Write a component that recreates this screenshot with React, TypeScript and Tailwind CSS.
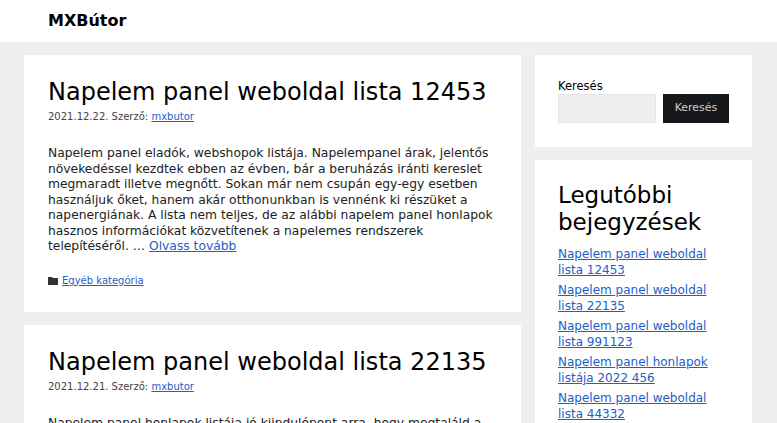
export default function App() {
  const recent = [
    "Napelem panel weboldal lista 12453",
    "Napelem panel weboldal lista 22135",
    "Napelem panel weboldal lista 991123",
    "Napelem panel honlapok listája 2022 456",
    "Napelem panel weboldal lista 44332",
  ]
  const link = "text-[#1e60c7] underline"
  return (
    <div className="h-[423px] overflow-hidden bg-[#efeff1] text-[#222] font-[DejaVu_Sans,sans-serif]">
      <header className="h-[42px] bg-white px-[48px] flex items-center">
        <span className="text-[16px] font-bold text-black">MXBútor</span>
      </header>
      <div className="flex gap-[14px] px-[24px] pt-[13px]">
        <main className="w-[497px] flex flex-col gap-[13px]">
          <article className="bg-white px-[24px] pt-[22px] pb-[24px]">
            <h2 className="text-[24px] leading-[30px] text-black">Napelem panel weboldal lista 12453</h2>
            <div className="text-[10px] mt-[2px] text-[#444]">
              2021.12.22. Szerző: <span className={link}>mxbutor</span>
            </div>
            <p className="mt-[22px] text-[12.3px] leading-[15.5px]">
              Napelem panel eladók, webshopok listája. Napelempanel árak, jelentős növekedéssel kezdtek ebben az évben, bár a beruházás iránti kereslet megmaradt illetve megnőtt. Sokan már nem csupán egy-egy esetben használjuk őket, hanem akár otthonunkban is vennénk ki részüket a napenergiának. A lista nem teljes, de az alábbi napelem panel honlapok hasznos információkat közvetítenek a napelemes rendszerek telepítéséről. … <span className={link}>Olvass tovább</span>
            </p>
            <div className="mt-[18px] flex items-center gap-[4px] text-[10px]">
              <svg width="10" height="9" viewBox="0 0 10 9"><path d="M0 1h4l1 1h5v7H0z" fill="#333" /></svg>
              <span className={link}>Egyéb kategória</span>
            </div>
          </article>
          <article className="bg-white px-[24px] pt-[22px] pb-[24px]">
            <h2 className="text-[24px] leading-[30px] text-black">Napelem panel weboldal lista 22135</h2>
            <div className="text-[10px] mt-[2px] text-[#444]">
              2021.12.21. Szerző: <span className={link}>mxbutor</span>
            </div>
            <p className="mt-[22px] text-[12.3px] leading-[15.5px]">
              Napelem panel honlapok listája jó kiindulópont arra, hogy megtaláld a legjobb és leghatékonyabb napelempaneleket. A lista tartalmazza a legnagyobb weboldalakat, ahol napelem paneleket vásárolhatsz.
            </p>
          </article>
        </main>
        <aside className="w-[217px] flex flex-col gap-[13px]">
          <div className="bg-white px-[23px] pt-[24px] pb-[24px]">
            <div className="text-[11.5px] leading-[14px] text-black">Keresés</div>
            <div className="flex gap-[7px] mt-[1px]">
              <div className="w-[98px] h-[29px] bg-[#efeff1] border border-[#e4e4e4]" />
              <div className="w-[66px] h-[29px] bg-[#18181c] text-[#ccc] text-[11px] flex items-center justify-center">Keresés</div>
            </div>
          </div>
          <div className="bg-white px-[23px] pt-[22px] pb-[24px]">
            <h2 className="text-[23px] leading-[27px] text-black">Legutóbbi bejegyzések</h2>
            <ul className="mt-[10px] flex flex-col gap-[4px]">
              {recent.map((r) => (
                <li key={r} className={`text-[12px] leading-[16px] ${link}`}>{r}</li>
              ))}
            </ul>
          </div>
        </aside>
      </div>
    </div>
  )
}
